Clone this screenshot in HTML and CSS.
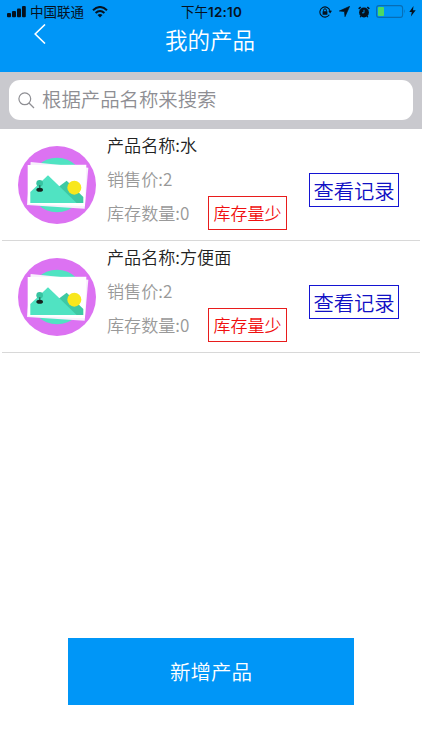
FILE: index.html
```html
<!DOCTYPE html>
<html lang="zh-CN">
<head>
<meta charset="utf-8">
<title>我的产品</title>
<link rel="stylesheet" href="styles.css">
</head>
<body>
<svg width="0" height="0" class="defs">
  <symbol id="photo" viewBox="0 0 234 234">
    <circle cx="117" cy="117" r="117" fill="#dc72f2"/>
    <circle cx="117" cy="117" r="82" fill="#50e3c2"/>
    <path d="M38 48L211 65L200 188L27 177Z" fill="#f8f1fc"/>
    <path d="M29 57L205 56L201 181L29 174Z" fill="#fff"/>
    <path d="M122 122L146 104L196 153V171H120Z" fill="#3ec9a3"/>
    <path d="M37 171V138L90 88L176 171Z" fill="#50e3c2"/>
    <circle cx="65" cy="112" r="10" fill="#36c3a0"/>
    <path d="M64 118h3v8h-3z" fill="#25453c"/>
    <ellipse cx="65" cy="131" rx="10" ry="6" fill="#16231f"/>
    <circle cx="169" cy="125" r="21" fill="#f8e71c"/>
  </symbol>
</svg>
<div class="app">
  <header class="header">
    <div class="status">
      <div class="status-side">
        <svg class="signal" width="19" height="12" viewBox="0 0 19 12"><rect x="0" y="7" width="4" height="4.300" rx="1"/><rect x="5" y="5" width="4" height="6.300" rx="1"/><rect x="10" y="2.500" width="4" height="8.800" rx="1"/><rect x="15" y="0" width="3.800" height="11.300" rx="1"/></svg>
        <span class="carrier">中国联通</span>
        <svg width="16" height="12" viewBox="0 0 16 12"><g fill="none" stroke="#05121f" stroke-width="2"><path d="M1 4.200Q8-2.200 15 4.200"/><path d="M3.600 7Q8 3 12.400 7"/></g><path d="M5.500 8.900Q8 7 10.500 8.900L8 11.400Z"/></svg>
      </div>
      <div class="time">下午<b>12:10</b></div>
      <div class="status-side status-right">
        <svg width="13" height="12" viewBox="0 0 13 12"><path d="M10.300 8.800A5.100 5.100 0 1 1 11 5" fill="none" stroke="#05121f" stroke-width="1.100"/><path d="M9.200 4.800h3.800L11.100 7.500ZM3.600 5.200h4.800v3.500H3.600Z"/><path d="M4.600 5.500V4.200a1.400 1.400 0 0 1 2.800 0v1.300" fill="none" stroke="#05121f"/></svg>
        <svg class="arrow" width="11" height="11" viewBox="0 0 11 11"><path d="M10.700.3L6 10.700L5.400 5.600L.3 5Z" stroke="#05121f" stroke-width=".6"/></svg>
        <svg class="alarm" width="12" height="12" viewBox="0 0 12 12"><circle cx="6" cy="6.500" r="4.900"/><path d="M.7 2.800L2.700 1M11.300 2.800L9.300 1" stroke="#05121f" stroke-width="1.600"/><path d="M2.900 10L2.200 11.200M9.100 10l.7 1.200" stroke="#05121f" stroke-width="1.200"/><path d="M6 3.800v3H4" fill="none" stroke="#0096f7" stroke-width=".9"/></svg>
        <svg class="battery" width="30" height="13" viewBox="0 0 30 13"><rect x=".6" y=".6" width="26" height="11.800" rx="2.500" fill="none" stroke="#076db4" stroke-width="1.100"/><rect x="2" y="2" width="6" height="9" rx=".8" fill="#4cd964"/><path d="M28 4.300q1.700 2.200 0 4.400z" fill="#076db4"/></svg>
        <svg class="bolt" width="7" height="11" viewBox="0 0 7 11"><path d="M4.500 0L.3 6h2.500L1.900 10.500L6.700 4.300H4Z"/></svg>
      </div>
    </div>
    <div class="nav">
      <svg class="back" width="12" height="20" viewBox="0 0 12 20"><path d="M11 .5L1.200 10L11 19.500" fill="none" stroke="#fff" stroke-width="1.600"/></svg>
      <h1>我的产品</h1>
    </div>
  </header>
  <div class="search">
    <div class="field">
      <svg width="17" height="17" viewBox="0 0 17 17"><g fill="none" stroke="#8e8e93" stroke-width="1.200"><circle cx="6.800" cy="6.800" r="5.900"/><path d="M11 11l5 5"/></g></svg>
      <span>根据产品名称来搜索</span>
    </div>
  </div>
  <main>
    <div class="row">
      <svg class="thumb"><use href="#photo"/></svg>
      <div class="info">
        <div class="name">产品名称:水</div>
        <div>销售价:2</div>
        <div>库存数量:0</div>
      </div>
      <div class="low">库存量少</div>
      <div class="records">查看记录</div>
    </div>
    <div class="row">
      <svg class="thumb"><use href="#photo"/></svg>
      <div class="info">
        <div class="name">产品名称:方便面</div>
        <div>销售价:2</div>
        <div>库存数量:0</div>
      </div>
      <div class="low">库存量少</div>
      <div class="records">查看记录</div>
    </div>
  </main>
  <button class="add">新增产品</button>
</div>
</body>
</html>
```
FILE: styles.css
```css
* { box-sizing: border-box; }
body { margin: 0; background: #fff; font-family: "Noto Sans CJK SC", sans-serif; font-weight: 350; }
.defs { display: none; }
svg { display: block; flex: none; }
.app { width: 422px; height: 750px; display: flex; flex-direction: column; overflow: hidden; }
.header { height: 72px; background: #0096f7; flex: none; }
.status { height: 23px; display: grid; grid-template-columns: 1fr auto 1fr; align-items: center; padding: 0 6px 0 7px; font-size: 13.5px; font-weight: 400; line-height: 22px; color: #05121f; fill: #05121f; }
.status-side { display: flex; align-items: center; }
.carrier { margin: 0 8px 0 4px; line-height: 20px; position: relative; top: -1px; }
.time b { font-family: Inter, sans-serif; font-weight: 600; font-size: 13.5px; letter-spacing: .2px; }
.status-right { justify-content: flex-end; }
.arrow { margin-left: 7px; }
.alarm { margin-left: 8px; }
.battery { margin-left: 6px; }
.bolt { margin-left: 3px; }
.nav { height: 49px; display: grid; grid-template-columns: 60px 1fr 62px; }
.back { margin: 1px 0 0 34px; }
h1 { margin: 0; color: #fff; font-size: 22.5px; font-weight: 350; line-height: 32px; text-align: center; }
.search { height: 57px; padding: 8px 9px 9px; background: #c9c9ce; flex: none; }
.field { width: 404px; height: 40px; border-radius: 11px; background: #fff; display: flex; align-items: center; gap: 7px; padding-left: 9px; color: #8e8e93; font-size: 19.4px; line-height: 38px; }
.field span { height: 40px; }
.row { height: 112.3px; margin: 0 2px; padding-left: 15.5px; border-bottom: 1px solid #d8d8d8; display: flex; align-items: flex-start; }
.row + .row { height: 112px; }
.thumb { width: 78px; height: 78px; margin-top: 16.5px; }
.info { width: 101px; margin: -1px 0 0 11.5px; color: #999; font-size: 17.1px; line-height: 33.9px; white-space: nowrap; }
.name { color: #222; }
.low { width: 79px; height: 34px; margin-top: 67px; border: 1px solid #e81c1c; color: #f00f0f; font-size: 17px; line-height: 32px; text-align: center; }
.records { width: 90px; height: 34px; margin: 44px 0 0 22px; border: 1px solid #1414d2; color: #1010c4; font-size: 20.3px; line-height: 32px; text-align: center; }
.add { width: 286px; height: 67px; margin: auto 0 45px 68px; border: 0; padding: 0; background: #0096f7; color: #fff; font: 350 20.5px/67px "Noto Sans CJK SC", sans-serif; }
```
